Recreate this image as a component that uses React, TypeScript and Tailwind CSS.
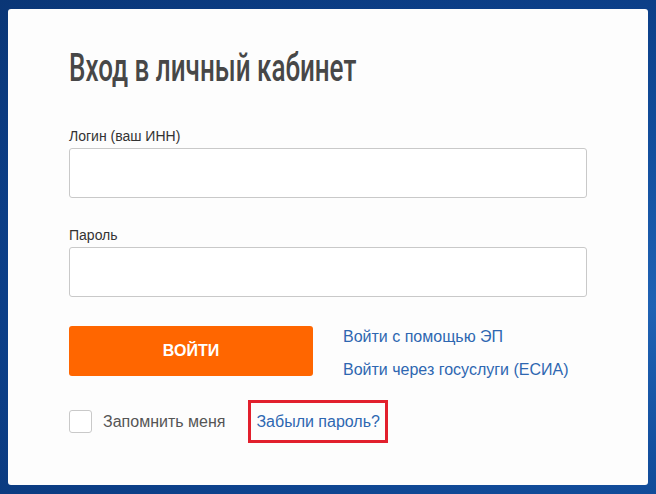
import React from "react";

const fieldClass =
  "block h-[50px] w-[518px] rounded-[3px] border border-[#c9c9c9] bg-white px-3 text-[16px] outline-none";

export default function App() {
  return (
    <div className="h-[494px] w-[656px] overflow-hidden bg-[radial-gradient(ellipse_at_100%_62%,#1f62b4_0%,#134f9e_35%,#0c3f88_70%,#0a3676_100%)] pl-2 pt-[9px] font-['Liberation_Sans',Arial,sans-serif]">
      <div className="h-[476px] w-[640px] rounded-[3px] bg-[#fdfdfd] pl-[61px] pt-[37px]">
        <h1 className="h-[44px] whitespace-nowrap font-['Roboto',sans-serif] text-[38px] font-medium leading-[44px] text-[#474747]">
          <span className="inline-block origin-left scale-x-[0.685]">Вход в личный кабинет</span>
        </h1>

        <label className="mt-[38px] block text-[14px] leading-[16px] text-[#333]">
          Логин (ваш ИНН)
        </label>
        <input className={`${fieldClass} mt-[4px]`} />

        <label className="mt-[29px] block text-[14px] leading-[16px] text-[#333]">
          Пароль
        </label>
        <input type="password" className={`${fieldClass} mt-[4px]`} />

        <div className="mt-[29px] flex items-start">
          <button className="h-[50px] w-[244px] rounded-[3px] bg-[#ff6600] text-[16px] font-bold text-white">
            ВОЙТИ
          </button>
          <div className="ml-[30px] flex flex-col gap-[16px] pt-[2px] text-[16px] leading-[17px] text-[#2e67b1]">
            <a href="#">Войти с помощью ЭП</a>
            <a href="#">Войти через госуслуги (ЕСИА)</a>
          </div>
        </div>

        <div className="mt-[22px] flex items-center">
          <span className="h-[23px] w-[23px] rounded-[3px] border border-[#c9c9c9] bg-white" />
          <span className="ml-[11px] text-[16px] text-[#555]">Запомнить меня</span>
          <span className="ml-[23px] border-[3px] border-[#e2202d] px-[5px] py-[10px] leading-[17px]">
            <a href="#" className="text-[16px] text-[#2e67b1]">
              Забыли пароль?
            </a>
          </span>
        </div>
      </div>
    </div>
  );
}
